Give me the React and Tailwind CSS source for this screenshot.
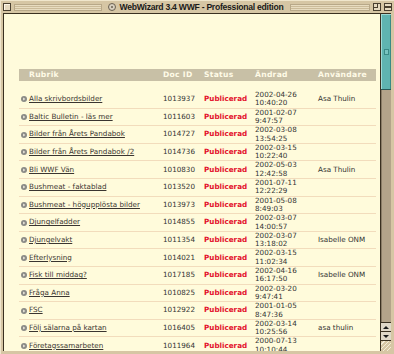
import React from 'react';

const rows = [
  ['Alla skrivbordsbilder', '1013937', '2002-04-26', '10:40:20', 'Asa Thulin'],
  ['Baltic Bulletin - läs mer', '1011603', '2001-02-07', '9:47:57', ''],
  ['Bilder från Årets Pandabok', '1014727', '2002-03-08', '13:54:25', ''],
  ['Bilder från Årets Pandabok /2', '1014736', '2002-03-15', '10:22:40', ''],
  ['Bli WWF Vän', '1010830', '2002-05-03', '12:42:58', 'Asa Thulin'],
  ['Bushmeat - faktablad', '1013520', '2001-07-11', '12:22:29', ''],
  ['Bushmeat - högupplösta bilder', '1013973', '2001-05-08', '8:49:03', ''],
  ['Djungelfadder', '1014855', '2002-03-07', '14:00:57', ''],
  ['Djungelvakt', '1011354', '2002-03-07', '13:18:02', 'Isabelle ONM'],
  ['Efterlysning', '1014021', '2002-03-15', '11:02:34', ''],
  ['Fisk till middag?', '1017185', '2002-04-16', '16:17:50', 'Isabelle ONM'],
  ['Fråga Anna', '1010825', '2002-03-20', '9:47:41', ''],
  ['FSC', '1012922', '2001-01-05', '8:47:36', ''],
  ['Följ sälarna på kartan', '1016405', '2002-03-14', '10:25:56', 'asa thulin'],
  ['Företagssamarbeten', '1011964', '2000-07-13', '10:10:44', ''],
];

const Bullet = () => (
  <svg width="6" height="6" viewBox="0 0 6 6" className="shrink-0">
    <circle cx="3" cy="3" r="3" fill="#8a8a86" />
    <path d="M2.2 1.5 L4.3 3 L2.2 4.5 Z" fill="#f4f1e4" />
  </svg>
);

const Stripes = ({ className }) => (
  <div
    className={`h-[7px] border border-[#b8a888] bg-[repeating-linear-gradient(to_bottom,#e8dcc0_0px,#e8dcc0_1px,#cbbb99_1px,#cbbb99_2px)] ${className}`}
  />
);

export default function App() {
  return (
    <div className="w-[394px] h-[354px] overflow-hidden bg-[#d6c6a4] flex flex-col border-t border-l border-[#f0e6cc] font-['DejaVu_Sans',sans-serif]">
      {/* title bar */}
      <div className="h-[12px] flex items-center px-[2px] gap-[3px]">
        <div className="w-[8px] h-[8px] border border-[#4a4030] bg-[#e6dac0] shadow-[inset_1px_1px_0_#fff8e8]" />
        <Stripes className="w-[88px]" />
        <div className="flex-1 flex items-center justify-center gap-[3px]">
          <div className="w-[8px] h-[8px] rounded-full border border-[#6a6050] bg-[#d8d0c0] flex items-center justify-center">
            <div className="w-[2px] h-[2px] rounded-full bg-[#6a6050]" />
          </div>
          <span className="text-[8.6px] font-bold text-[#1a1a1a] tracking-[-0.25px] leading-none font-['Liberation_Sans',sans-serif]">
            WebWizard 3.4 WWF - Professional edition
          </span>
        </div>
        <Stripes className="w-[80px]" />
        <div className="w-[8px] h-[8px] border border-[#4a4030] bg-[#e6dac0] relative">
          <div className="absolute left-0 top-0 w-[4px] h-[4px] border-r border-b border-[#4a4030]" />
        </div>
        <div className="w-[8px] h-[8px] border border-[#4a4030] bg-[#e6dac0] flex flex-col justify-center">
          <div className="h-[2px] border-y border-[#4a4030]" />
        </div>
      </div>

      {/* body */}
      <div className="flex-1 flex pl-[2px] pr-[3px] min-h-0">
        <div className="flex-1 flex min-h-0 border-t border-l border-[#3a3020]">
          {/* content */}
          <div className="flex-1 bg-[#fffbdb] overflow-hidden pt-[55px] pl-[15px] pr-[4px]">
            <div className="grid grid-cols-[144px_41px_51px_63px_1fr] h-[12px] items-center bg-[#c8c0a6] text-[#fffbe6] text-[7.6px] font-bold tracking-[0.3px] leading-none">
              <span className="pl-[10px]">Rubrik</span>
              <span>Doc ID</span>
              <span>Status</span>
              <span>Ändrad</span>
              <span>Användare</span>
            </div>
            <div className="h-[10px]" />
            {rows.map(([title, id, date, time, user]) => (
              <div
                key={id}
                className="grid grid-cols-[144px_41px_51px_63px_1fr] h-[17.6px] items-center border-b border-[#f2dcbc] text-[7.2px] text-[#333] leading-[8.4px]"
              >
                <div className="flex items-center gap-[2px] pl-[2px]">
                  <Bullet />
                  <a className="underline underline-offset-[1px] text-[#3a3530] whitespace-nowrap">{title}</a>
                </div>
                <span>{id}</span>
                <span className="font-bold text-[#e3112c]">Publicerad</span>
                <div className="flex flex-col">
                  <span>{date}</span>
                  <span>{time}</span>
                </div>
                <span className="whitespace-nowrap">{user}</span>
              </div>
            ))}
          </div>

          {/* scrollbar */}
          <div className="w-[11px] flex flex-col border-l border-[#3a3020] bg-[#b4a48a]">
            <div className="h-[76px] bg-[#5fb4b0] border-b border-[#2a5a58] shadow-[inset_1px_1px_0_#9fdad6,inset_-1px_0_0_#3a8a86] flex items-center justify-center">
              <div className="w-[5px] h-[6px] border border-[#3a8a86] bg-[#78c4c0]" />
            </div>
            <div className="flex-1 shadow-[inset_1px_0_0_#8a7c66]" />
            <div className="h-[9px] border-t border-[#3a3020] bg-[#e0d8c8] flex items-center justify-center">
              <div className="w-0 h-0 border-x-[3px] border-x-transparent border-b-[3px] border-b-[#1a1a1a]" />
            </div>
            <div className="h-[9px] border-t border-[#3a3020] bg-[#e0d8c8] flex items-center justify-center">
              <div className="w-0 h-0 border-x-[3px] border-x-transparent border-t-[3px] border-t-[#1a1a1a]" />
            </div>
            <div className="h-[11px] border-t border-[#3a3020] bg-[#d6c6a4] bg-[repeating-linear-gradient(135deg,#d6c6a4_0px,#d6c6a4_2px,#f4ecd8_2px,#f4ecd8_3px)]" />
          </div>
        </div>
      </div>
      <div className="h-[3px]" />
    </div>
  );
}
